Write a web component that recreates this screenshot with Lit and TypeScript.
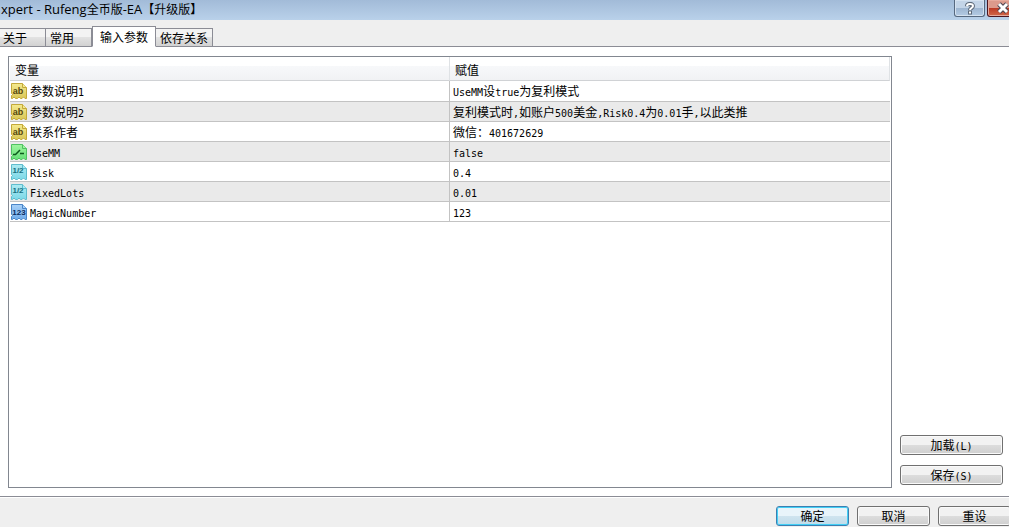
import { LitElement, html, css, svg } from "lit";
import { customElement, property, state } from "lit/decorators.js";

type Kind = "text" | "bool" | "real" | "int";

interface Param {
  kind: Kind;
  name: string;
  value: string;
}

const PARAMS: Param[] = [
  { kind: "text", name: "参数说明1", value: "UseMM设true为复利模式" },
  { kind: "text", name: "参数说明2", value: "复利模式时,如账户500美金,Risk0.4为0.01手,以此类推" },
  { kind: "text", name: "联系作者", value: "微信：401672629" },
  { kind: "bool", name: "UseMM", value: "false" },
  { kind: "real", name: "Risk", value: "0.4" },
  { kind: "real", name: "FixedLots", value: "0.01" },
  { kind: "int", name: "MagicNumber", value: "123" },
];

const TABS = ["关于", "常用", "输入参数", "依存关系"];

// Wraps each Latin run so that it can take its own face and size.
const mixed = (text: string) =>
  text
    .split(/([\x20-\x7e]+)/)
    .filter((run) => run)
    .map((run) => (/^[\x20-\x7e]/.test(run) ? html`<span class="half">${run}</span>` : run));

const mixedStyles = css`
  .half {
    font-family: "DejaVu Sans Mono", monospace;
    font-size: 10px;
    line-height: 1;
  }
`;

@customElement("type-icon")
export class TypeIcon extends LitElement {
  @property() kind: Kind = "text";

  static styles = css`
    :host {
      display: block;
      width: 16px;
      height: 16px;
      flex: none;
    }
    svg {
      display: block;
    }
    text {
      font-family: "Liberation Sans", sans-serif;
      text-anchor: middle;
    }
    .label {
      font-size: 9px;
      font-weight: 700;
    }
    .small {
      font-size: 8px;
      font-weight: 700;
    }
    .text { --edge: #c3a93a; --top: #f5ea8f; --low: #d9c656; --ink: #55480f; }
    .bool { --edge: #4fc162; --top: #9ff5a0; --low: #66e078; --ink: #0c5a1c; }
    .real { --edge: #5fbccd; --top: #aeebf2; --low: #7cd8e8; --ink: #17707f; }
    .int { --edge: #4b86c8; --top: #a9d1f8; --low: #6fabea; --ink: #0b2c60; }
    .page {
      fill: url(#g);
      stroke: var(--edge);
    }
    .fold {
      fill: var(--top);
      stroke: var(--edge);
    }
    .ink {
      fill: var(--ink);
    }
    .line {
      fill: none;
      stroke: var(--ink);
      stroke-width: 1.5;
    }
    .from { stop-color: var(--top); }
    .to { stop-color: var(--low); }
  `;

  private mark() {
    switch (this.kind) {
      case "text":
        return svg`<text class="ink label" x="7" y="11">ab</text>`;
      case "bool":
        return svg`<path class="line" d="M2 10.5H4.5L9 6M9 9.5H13"></path>`;
      case "real":
        return svg`<text class="ink small" x="7" y="9">1/2</text>`;
      default:
        return svg`<text class="ink small" x="8" y="11">123</text>`;
    }
  }

  render() {
    return html`<svg class=${this.kind} width="16" height="16" viewBox="0 0 16 16" aria-hidden="true">
      <defs>
        <linearGradient id="g" x1="0" y1="0" x2="0" y2="1">
          <stop class="from" offset="0"></stop>
          <stop class="to" offset="1"></stop>
        </linearGradient>
      </defs>
      <path class="page" d="M.5 .5H11.5L15.5 4.5V15.5H14L12.5 14L11 15.5H9.5L8 14L6.5 15.5H4.5L3 14L1.5 15.5H.5V12.5L1.5 11.5L.5 10.5Z"></path>
      <path class="fold" d="M11.5 .5V4.5H15.5"></path>
      ${this.mark()}
    </svg>`;
  }
}

@customElement("param-table")
export class ParamTable extends LitElement {
  static styles = [
    mixedStyles,
    css`
      :host {
        display: block;
        box-sizing: border-box;
        border: 1px solid #828790;
        padding: 0 1px;
        background: #fff;
      }
      table {
        width: 100%;
        table-layout: fixed;
        border-collapse: separate;
        border-spacing: 0;
      }
      th {
        box-sizing: border-box;
        height: 24px;
        padding: 2px 5px 0;
        border-right: 1px solid #dfe2e5;
        border-bottom: 1px solid #d0d2d5;
        background: linear-gradient(#fff 0 40%, #f7f8fa 40%, #f1f2f4);
        font-weight: 400;
        text-align: left;
      }
      td {
        box-sizing: border-box;
        height: 20px;
        padding: 0 3px;
        border-bottom: 1px solid #c3c3c3;
        line-height: 16px;
        white-space: nowrap;
      }
      td:first-child {
        border-right: 1px solid #c3c3c3;
        padding: 0 1px;
      }
      tr:first-child td {
        height: 21px;
      }
      tbody tr:nth-child(even) {
        background: #eaeaea;
      }
      .name {
        display: flex;
        align-items: center;
        gap: 3px;
      }
    `,
  ];

  render() {
    return html`<table>
      <thead>
        <tr><th scope="col">变量</th><th scope="col">赋值</th></tr>
      </thead>
      <tbody>
        ${PARAMS.map(
          (p) => html`<tr>
            <td><div class="name"><type-icon .kind=${p.kind}></type-icon><span>${mixed(p.name)}</span></div></td>
            <td>${mixed(p.value)}</td>
          </tr>`
        )}
      </tbody>
    </table>`;
  }
}

@customElement("app-root")
export class AppRoot extends LitElement {
  @state() private active = 2;

  static styles = [
    mixedStyles,
    css`
      :host {
        display: flex;
        flex-direction: column;
        min-height: 100vh;
        overflow: hidden;
        background: #fff;
        color: #000;
        font: 12px/16px "Noto Sans CJK SC", sans-serif;
      }
      button {
        box-sizing: border-box;
        margin: 0;
        padding: 0;
        color: inherit;
        font: inherit;
      }
      .title {
        display: flex;
        justify-content: space-between;
        height: 20px;
        background: linear-gradient(#a2bbd8, #b9d1ea);
      }
      h1 {
        margin: 0;
        padding-left: 1px;
        font: 12px/18px "Noto Sans CJK SC", sans-serif;
        white-space: nowrap;
      }
      h1 .half {
        font-family: "Open Sans", sans-serif;
        font-size: 13px;
      }
      .caption {
        display: flex;
        gap: 2px;
        margin-right: -9px;
      }
      .cap {
        display: grid;
        place-items: center;
        width: 31px;
        height: 17px;
        border: 1px solid #56687f;
        border-top: 0;
        border-radius: 0 0 3px 3px;
        background: linear-gradient(#c3d4e7 0 50%, #9db5d0 50%, #b4cbe4);
        box-shadow: inset 0 0 0 1px #d5e2f0;
      }
      .close {
        border-color: #4b1620;
        background: linear-gradient(#dc9a8c 0 50%, #bc3a25 50%, #d2694a);
        box-shadow: inset 0 0 0 1px #e6aa9d;
      }
      .tabs {
        display: flex;
        align-items: flex-end;
        height: 27px;
        background: linear-gradient(#8b8c95, #8b8c95) bottom / 100% 1px no-repeat #efefef;
      }
      .tab {
        height: 19px;
        padding: 0 4px;
        border: 1px solid #8b8c95;
        border-left-width: 0;
        background: linear-gradient(#f3f3f3 0 50%, #e2e2e2 50%, #d2d2d2);
        line-height: 18px;
        text-align: left;
      }
      .tab:nth-child(-n + 2) {
        width: 46px;
      }
      .tab:first-child {
        padding-left: 3px;
      }
      .tab.on {
        height: 21px;
        padding: 0 7px;
        border-left-width: 1px;
        border-bottom-color: #fff;
        background: #fff;
      }
      .panel {
        display: flex;
        flex: 1;
        gap: 8px;
        padding: 9px 6px 8px 8px;
      }
      param-table {
        flex: 1;
        min-width: 0;
      }
      .side {
        display: flex;
        flex-direction: column;
        justify-content: flex-end;
        gap: 10px;
        width: 103px;
        padding-bottom: 3px;
      }
      .btn {
        height: 20px;
        border: 1px solid #707070;
        border-radius: 3px;
        background: linear-gradient(#f2f2f2 0 50%, #dddddd 50%, #cfcfcf);
        box-shadow: inset 0 0 0 1px #fafafa;
        line-height: 18px;
      }
      .footer {
        display: flex;
        justify-content: flex-end;
        gap: 8px;
        margin-right: -2px;
        padding: 9px 0 1px;
        border-top: 1px solid #8b8c95;
        background: #efefef;
        box-shadow: inset 0 1px #fff;
      }
      .footer .btn {
        width: 73px;
      }
      .footer .default {
        border-color: #3c7fb1;
        background: linear-gradient(#e8f4fa 0 50%, #cfe4ef 50%, #c0dcea);
        box-shadow: inset 0 0 0 1px #43cff5;
      }
    `,
  ];

  render() {
    return html`
      <header class="title">
        <h1>${mixed("xpert - Rufeng全币版-EA【升级版】")}</h1>
        <div class="caption">
          <button class="cap" aria-label="Help">
            <svg width="12" height="13" viewBox="0 0 12 13">
              <path d="M3 4.2C3 1.2 9 1.2 9 4C9 6 6 6 6 8" fill="none" stroke="#5c6878" stroke-width="4"></path>
              <rect x="4" y="8.5" width="4" height="4" fill="#5c6878"></rect>
              <path d="M3 4.2C3 1.2 9 1.2 9 4C9 6 6 6 6 8M6 9.5V11.5" fill="none" stroke="#fff" stroke-width="2"></path>
            </svg>
          </button>
          <button class="cap close" aria-label="Close">
            <svg width="14" height="12" viewBox="0 0 14 12">
              <path d="M3 2L11 10M11 2L3 10" stroke="#4b4552" stroke-width="5"></path>
              <path d="M3 2L11 10M11 2L3 10" stroke="#fff" stroke-width="3"></path>
            </svg>
          </button>
        </div>
      </header>
      <nav class="tabs" role="tablist">
        ${TABS.map(
          (label, i) => html`<button
            class="tab ${i === this.active ? "on" : ""}"
            role="tab"
            aria-selected=${i === this.active ? "true" : "false"}
            @click=${() => (this.active = i)}
          >${label}</button>`
        )}
      </nav>
      <main class="panel">
        <param-table></param-table>
        <div class="side">
          <button class="btn">加载${mixed("(L)")}</button>
          <button class="btn">保存${mixed("(S)")}</button>
        </div>
      </main>
      <footer class="footer">
        <button class="btn default">确定</button>
        <button class="btn">取消</button>
        <button class="btn">重设</button>
      </footer>
    `;
  }
}
